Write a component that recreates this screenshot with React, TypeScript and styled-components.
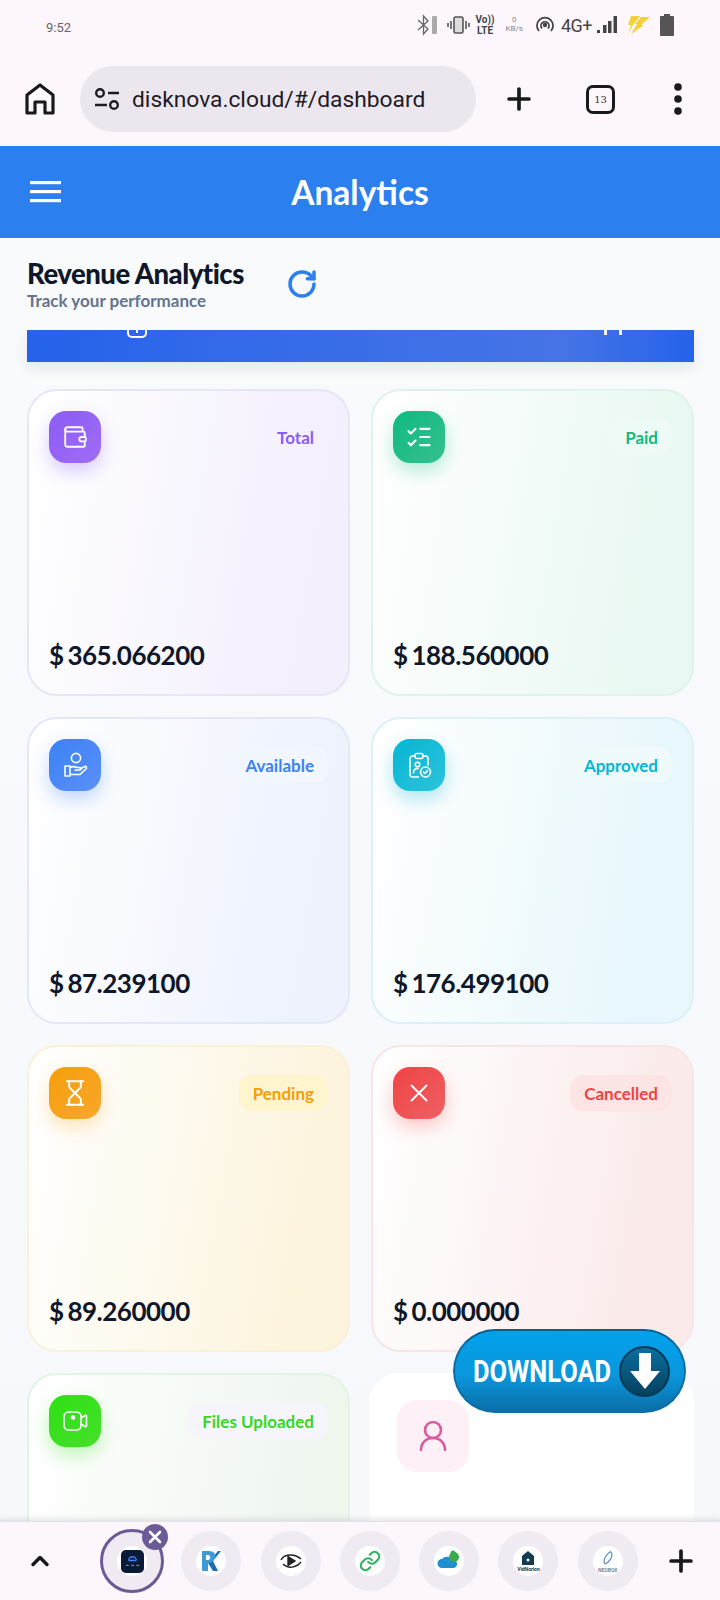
import React from 'react';
import styled, { createGlobalStyle } from 'styled-components';
import {
  Wallet,
  ListChecks,
  Hourglass,
  X,
  RotateCw,
  Plus,
  ChevronUp,
  Link,
} from 'lucide-react';

const GlobalStyle = createGlobalStyle`
  html, body { margin: 0; padding: 0; background: #fdf6fd; }
  * { box-sizing: border-box; }
  body { font-family: "Lato", "Liberation Sans", sans-serif; }
`;

const Screen = styled.div`
  position: relative;
  width: 720px;
  height: 1600px;
  display: flex;
  flex-direction: column;
  overflow: hidden;
`;

const BrowserChrome = styled.div`
  height: 146px;
  flex-shrink: 0;
  background: #fdf6fd;
  display: flex;
  flex-direction: column;
`;

const StatusBar = styled.div`
  height: 65px;
  padding: 14px 46px 0 46px;
  display: flex;
  align-items: flex-start;
  justify-content: space-between;
  color: #666;
  font: 13px "Roboto", sans-serif;
`;

const Clock = styled.span`
  margin-top: 6px;
`;

const StatusIcons = styled.div`
  display: flex;
  align-items: center;
  height: 22px;
  color: #444;
`;

const StatusSlot = styled.span<{ $gap: number }>`
  display: flex;
  margin-left: ${(p) => p.$gap}px;
`;

const NetText = styled.span`
  font-size: 18px;
  letter-spacing: -0.5px;
  color: #444;
`;

const TinyStack = styled.span<{ $size: number; $weight: number; $color: string }>`
  display: flex;
  flex-direction: column;
  align-items: center;
  font-size: ${(p) => p.$size}px;
  line-height: 1.1;
  font-weight: ${(p) => p.$weight};
  color: ${(p) => p.$color};
`;

const UrlRow = styled.div`
  display: flex;
  align-items: center;
  height: 68px;
  padding: 0 0 0 24px;
`;

const UrlPill = styled.div`
  width: 396px;
  height: 66px;
  margin-left: 24px;
  border-radius: 33px;
  background: #ece7ef;
  display: flex;
  align-items: center;
  gap: 12px;
  padding-left: 14px;
  color: #1f1b24;
  font: 22.8px "Roboto", sans-serif;
  white-space: nowrap;
`;

const ChromeActions = styled.div`
  display: flex;
  align-items: center;
  margin-left: 26px;
`;

const TabCount = styled.div`
  width: 29px;
  height: 29px;
  margin: 0 59px 0 50px;
  border: 3px solid #1a1a1a;
  border-radius: 7px;
  font: 10px "DejaVu Serif", serif;
  color: #333;
  display: flex;
  align-items: center;
  justify-content: center;
`;

const AppHeader = styled.header`
  height: 92px;
  flex-shrink: 0;
  background: #2b7fef;
  color: #fff;
  display: flex;
  align-items: center;
  padding-left: 30px;
`;

const HeaderTitle = styled.h1`
  flex: 1;
  margin: 0 0 0 -61px;
  text-align: center;
  font-size: 33.5px;
  font-weight: 700;
`;

const Main = styled.main`
  flex: 1;
  min-height: 0;
  background: linear-gradient(180deg, #f8fafc 0%, #f6f8fc 100%);
  display: flex;
  flex-direction: column;
`;

const TitleRow = styled.div`
  height: 92px;
  flex-shrink: 0;
  padding: 0 27px;
  display: flex;
  align-items: center;
  gap: 42px;
`;

const TitleText = styled.div`
  display: flex;
  flex-direction: column;
  width: 217px;
  padding-top: 2px;
`;

const PageTitle = styled.h2`
  margin: 0;
  color: #0f172a;
  font-size: 27.5px;
  line-height: 30px;
  font-weight: 900;
  letter-spacing: -0.5px;
  white-space: nowrap;
`;

const PageSub = styled.div`
  margin-top: 1px;
  color: #64748b;
  font-size: 17px;
  line-height: 22px;
  font-weight: 700;
  white-space: nowrap;
`;

const Scroller = styled.div`
  flex: 1;
  min-height: 0;
  overflow: hidden;
  padding: 0 26px 0 27px;
`;

const Banner = styled.div`
  height: 32px;
  background: linear-gradient(90deg, #2563eb 0%, #3a6ee8 50%, #4674e6 80%, #2563eb 100%);
  box-shadow: 0 6px 14px rgba(15, 23, 42, 0.08);
  display: flex;
  justify-content: space-between;
  align-items: flex-start;
  overflow: hidden;
  padding: 0 72px 0 100px;
`;

const BannerGlyph = styled.span`
  display: flex;
  justify-content: center;
  width: 20px;
  height: 8px;
  border: 2px solid #fff;
  border-top: 0;
  border-radius: 0 0 5px 5px;
`;

const BannerGlyphDot = styled.span`
  width: 2px;
  height: 3px;
  background: #fff;
`;

const BannerTicks = styled.span`
  display: flex;
  gap: 12px;
`;

const BannerTick = styled.span`
  width: 3px;
  height: 5px;
  background: #f3f6fe;
`;

const CardGrid = styled.div`
  display: grid;
  grid-template-columns: 323px 323px;
  grid-auto-rows: 307px;
  column-gap: 21px;
  row-gap: 21px;
  margin-top: 27px;
`;

interface Tone {
  $tint: string;
  $edge: string;
}

const Card = styled.div<Tone>`
  border-radius: 30px;
  border: 2px solid ${(p) => p.$edge};
  background: linear-gradient(100deg, #ffffff 0%, ${(p) => p.$tint} 85%);
  padding: 20px 20px 23px 20px;
  display: flex;
  flex-direction: column;
  justify-content: space-between;
`;

const PlainCard = styled.div`
  border-radius: 30px;
  background: #fff;
  padding: 27px 28px;
  margin-left: -2px;
`;

const PlainIcon = styled.div`
  width: 72px;
  height: 72px;
  border-radius: 20px;
  background: #fdf0f7;
  display: flex;
  align-items: center;
  justify-content: center;
`;

const CardTop = styled.div`
  display: flex;
  align-items: flex-start;
  justify-content: space-between;
`;

const IconTile = styled.div<{ $from: string; $to: string; $glow: string }>`
  width: 52px;
  height: 52px;
  border-radius: 17px;
  color: #fff;
  background: linear-gradient(135deg, ${(p) => p.$from}, ${(p) => p.$to});
  box-shadow: 0 8px 18px ${(p) => p.$glow};
  display: flex;
  align-items: center;
  justify-content: center;
`;

const Badge = styled.div<{ $color: string; $bg: string }>`
  margin-top: 8px;
  height: 36px;
  padding: 0 14px;
  border-radius: 13px;
  color: ${(p) => p.$color};
  background: ${(p) => p.$bg};
  font-size: 17px;
  font-weight: 700;
  display: flex;
  align-items: center;
`;

const Amount = styled.div`
  color: #0f172a;
  font-size: 26px;
  line-height: 32px;
  font-weight: 700;
  letter-spacing: -0.5px;
  word-spacing: -2px;
`;

const BottomBar = styled.nav`
  position: absolute;
  left: 0;
  right: 0;
  bottom: 0;
  height: 79px;
  background: #fdf6fd;
  border-top: 1px solid #e6e2e8;
  box-shadow: 0 -2px 4px rgba(0, 0, 0, 0.06);
  display: flex;
  align-items: center;
  padding: 0 0 0 26px;
`;

const ChevronSlot = styled.div`
  width: 28px;
  display: flex;
  justify-content: center;
  margin-right: 48px;
`;

const TabList = styled.div`
  display: flex;
  gap: 19.3px;
`;

const TabCircle = styled.div<{ $active?: boolean }>`
  position: relative;
  width: 60px;
  height: 60px;
  border-radius: 50%;
  background: #f0eaf3;
  display: flex;
  align-items: center;
  justify-content: center;
  ${(p) => p.$active && 'outline: 3px solid #6c5a96; outline-offset: -1px;'}
`;

const TabFace = styled.div`
  width: 30px;
  height: 30px;
  border-radius: 50%;
  background: #fff;
  display: flex;
  flex-direction: column;
  align-items: center;
  justify-content: center;
`;

const TabCaption = styled.span<{ $color: string }>`
  font: 700 5px/6px "Roboto", sans-serif;
  color: ${(p) => p.$color};
`;

const CloseDot = styled.div`
  position: absolute;
  top: -7px;
  right: -6px;
  width: 26px;
  height: 26px;
  border-radius: 50%;
  background: #6c5a96;
  color: #fff;
  display: flex;
  align-items: center;
  justify-content: center;
`;

const AddTab = styled.div`
  margin-left: 26px;
  display: flex;
`;

const DownloadButton = styled.div`
  position: absolute;
  left: 453px;
  top: 1329px;
  width: 233px;
  height: 84px;
  border-radius: 42px;
  border: 2px solid #0b6ea6;
  border-top-color: #075f92;
  background: linear-gradient(180deg, #02a2ec 0%, #0b97dc 55%, #0a6ea8 100%);
  display: flex;
  align-items: center;
  padding-left: 18px;
  gap: 9px;
`;

const DownloadLabel = styled.span`
  width: 137px;
  color: #fff;
  font: 700 31px "Roboto", sans-serif;
  white-space: nowrap;
  transform: scaleX(0.82);
  transform-origin: left center;
`;

const DownloadDisc = styled.span`
  width: 51px;
  height: 51px;
  border-radius: 50%;
  background: linear-gradient(180deg, #0b6f9f, #04405f);
  border: 2px solid #053a57;
  display: flex;
  align-items: center;
  justify-content: center;
`;

const BottomFade = styled.div`
  position: absolute;
  left: 0;
  right: 0;
  bottom: 79px;
  height: 8px;
  background: linear-gradient(180deg, rgba(255, 255, 255, 0), rgba(200, 200, 205, 0.18));
`;

const lineIcon = {
  width: 28,
  height: 28,
  viewBox: '0 0 28 28',
  fill: 'none',
  stroke: 'currentColor',
  strokeWidth: 1.6,
  strokeLinecap: 'round' as const,
  strokeLinejoin: 'round' as const,
};

const HandPerson = () => (
  <svg {...lineIcon}>
    <circle cx="15" cy="7" r="4.6" />
    <path d="M4 15h5v10H4zM9 16.500c3-1.500 5-1 7 0h3c1.500 0 1.500 2.500 0 2.500h-5M19 18l5-2.500c1.500-.5 2 1.500 1 2.500l-6 5.500H9" />
  </svg>
);

const ClipboardUser = () => (
  <svg {...lineIcon}>
    <path d="M10 5H7.500A2.500 2.500 0 0 0 5 7.500v16A2.500 2.500 0 0 0 7.500 26h6M18 5h2.500A2.500 2.500 0 0 1 23 7.500V14" />
    <rect x="10" y="2.500" width="8" height="5" rx="2" />
    <circle cx="12.500" cy="13.500" r="2.300" />
    <path d="M8.500 22c0-3 2-4.500 4.500-4.500" />
    <circle cx="20.500" cy="21" r="5" />
    <path d="M18.500 21l1.500 1.500 2.500-3" />
  </svg>
);

const VideoSquare = () => (
  <svg {...lineIcon}>
    <rect x="3" y="5" width="17" height="18" rx="4.500" />
    <circle cx="12" cy="10.500" r="1.500" fill="currentColor" />
    <path d="M20 11l4-2.500c.8-.4 1.500 0 1.500 1v9c0 1-.7 1.400-1.500 1L20 17" />
  </svg>
);

const cards = [
  { label: 'Total', amount: '$ 365.066200', color: '#8b5cf6', from: '#8b5cf6', to: '#a06cf6', glow: 'rgba(139,92,246,.3)', tint: '#f3effd', edge: '#e9e5f8', badge: 'transparent', icon: <Wallet size={26} strokeWidth={1.7} /> },
  { label: 'Paid', amount: '$ 188.560000', color: '#10b981', from: '#10b981', to: '#34c08e', glow: 'rgba(16,185,129,.28)', tint: '#e9f8f2', edge: '#def3ec', badge: '#eefaf5', icon: <ListChecks size={28} strokeWidth={1.8} /> },
  { label: 'Available', amount: '$ 87.239100', color: '#3b82f6', from: '#3b82f6', to: '#5b8ff7', glow: 'rgba(59,130,246,.3)', tint: '#edf2fd', edge: '#e1e8f8', badge: '#f2f6fe', icon: <HandPerson /> },
  { label: 'Approved', amount: '$ 176.499100', color: '#06b6d4', from: '#06b6d4', to: '#2cc3dc', glow: 'rgba(6,182,212,.3)', tint: '#e7f7fc', edge: '#dcf1f7', badge: '#effafd', icon: <ClipboardUser /> },
  { label: 'Pending', amount: '$ 89.260000', color: '#f59e0b', from: '#f59e0b', to: '#f9a72c', glow: 'rgba(245,158,11,.26)', tint: '#fcf4dd', edge: '#faf1d6', badge: '#fef4cd', icon: <Hourglass size={28} strokeWidth={1.7} /> },
  { label: 'Cancelled', amount: '$ 0.000000', color: '#ef4444', from: '#ef4444', to: '#f05f64', glow: 'rgba(239,68,68,.28)', tint: '#fbeaea', edge: '#f8e5e6', badge: '#fee5e5', icon: <X size={30} strokeWidth={1.5} /> },
  { label: 'Files Uploaded', amount: '', color: '#39d625', from: '#2fe014', to: '#45e02a', glow: 'rgba(47,224,20,.28)', tint: '#eef6ee', edge: '#e2f4e3', badge: '#f6f5fc', icon: <VideoSquare /> },
];

const TuneIcon = () => (
  <svg width="26" height="24" viewBox="0 0 26 24" fill="none" stroke="#1f1b24" strokeWidth="2.4">
    <circle cx="6" cy="6" r="3.800" />
    <path d="M14 6h11M1 18h12" />
    <circle cx="20" cy="18" r="3.800" />
  </svg>
);

const tabFaces = [
  <svg width="22" height="24" viewBox="0 0 22 24"><path d="M8 14l10-12h3l-8 10 5 10h-5z" fill="#1c6fb0" /><path fillRule="evenodd" d="M2 2h7c6 0 7 4 6 7s-4 5-7 5v8H2zM6 6v5h2c3 0 3-5 0-5z" fill="#3f9bd6" /></svg>,
  <svg width="22" height="16" viewBox="0 0 22 16" fill="none" stroke="#222" strokeWidth="1.4"><path d="M1 7c3-6 13-7 20-1M3 11c5 5 13 4 18-2" /><path d="M8 3.500l7 4.500-7 4.500z" fill="#222" /></svg>,
  <Link size={22} color="#2fb45f" strokeWidth={2.4} />,
  <svg width="24" height="24" viewBox="0 0 24 24"><path d="M5 19a4.500 4.500 0 0 1 0-9 6 6 0 0 1 10 1 4 4 0 0 1 2 8z" fill="#1f8fd4" /><circle cx="17" cy="8" r="5" fill="#3aaa4a" /><circle cx="16" cy="4" r="2.500" fill="#3aaa4a" /></svg>,
  <>
    <svg width="14" height="16" viewBox="0 0 14 16"><path d="M7 1l6 5v9H1V6z" fill="#123a52" /><circle cx="7" cy="10" r="1.500" fill="#fff" /></svg>
    <TabCaption $color="#123a52">VidNorion</TabCaption>
  </>,
  <>
    <svg width="18" height="18" viewBox="0 0 24 24" fill="none" stroke="#5a8fc4" strokeWidth="1.6"><path d="M8 20c-4-6 3-14 8-17M16 4c4 6-3 14-8 16" /></svg>
    <TabCaption $color="#6f8aa6">NEOBOX</TabCaption>
  </>,
];

const App: React.FC = () => {
  return (
    <Screen>
      <GlobalStyle />
      <BrowserChrome>
        <StatusBar>
          <Clock>9:52</Clock>
          <StatusIcons>
            <svg width="21" height="22" viewBox="0 0 21 22" fill="none" stroke="#666" strokeWidth="1.300"><path d="M1 6l10 9-4.500 5V2L11 7 1 16" /><rect x="15" y="2" width="5" height="18" rx="1" fill="#aaa" stroke="none" /></svg>
            <StatusSlot $gap={9}>
              <svg width="23" height="20" viewBox="0 0 23 20" fill="none" stroke="#555" strokeWidth="1.600"><rect x="7" y="2" width="9" height="16" rx="1.500" fill="#ddd" /><path d="M4 6v8M1 8v4M19 6v8M22 8v4" /></svg>
            </StatusSlot>
            <StatusSlot $gap={5}>
              <TinyStack $size={10} $weight={700} $color="#444"><span>Vo))</span><span>LTE</span></TinyStack>
            </StatusSlot>
            <StatusSlot $gap={11}>
              <TinyStack $size={8} $weight={400} $color="#888"><span>0</span><span>KB/s</span></TinyStack>
            </StatusSlot>
            <StatusSlot $gap={13}>
              <svg width="18" height="18" viewBox="0 0 18 18" fill="none" stroke="#444" strokeWidth="1.800"><path d="M3 15a8 8 0 1 1 12 0M6 12.500a4 4 0 1 1 6 0" /><circle cx="9" cy="9" r="1.300" fill="#444" /></svg>
            </StatusSlot>
            <StatusSlot $gap={7}>
              <NetText>4G+</NetText>
            </StatusSlot>
            <StatusSlot $gap={5}>
              <svg width="20" height="18" viewBox="0 0 20 18" fill="#444"><rect x="0" y="14" width="3" height="3" /><rect x="6" y="9" width="3.500" height="8" /><rect x="11" y="5" width="3.500" height="12" /><rect x="16.500" y="0" width="3.500" height="17" /></svg>
            </StatusSlot>
            <StatusSlot $gap={9}>
              <svg width="24" height="22" viewBox="0 0 24 22" fill="#f3d13a"><path d="M5 2h9L7 11l-5 9 3-9H2zM15 3h9l-9 8h3L5 20l6-10H9z" /></svg>
            </StatusSlot>
            <StatusSlot $gap={10}>
              <svg width="14" height="22" viewBox="0 0 14 22" fill="#555"><path d="M4 0h6v2h3a1 1 0 0 1 1 1v18a1 1 0 0 1-1 1H1a1 1 0 0 1-1-1V3a1 1 0 0 1 1-1h3z" /></svg>
            </StatusSlot>
          </StatusIcons>
        </StatusBar>
        <UrlRow>
          <svg width="32" height="34" viewBox="0 0 32 34" fill="none" stroke="#1a1a1a" strokeWidth="3.200" strokeLinejoin="round"><path d="M3 13L16 3l13 10v18h-8V20H11v11H3z" /></svg>
          <UrlPill>
            <TuneIcon />
            disknova.cloud/#/dashboard
          </UrlPill>
          <ChromeActions>
            <Plus size={34} color="#1a1a1a" strokeWidth={2.6} />
            <TabCount>13</TabCount>
            <svg width="8" height="32" viewBox="0 0 8 32" fill="#1a1a1a"><circle cx="4" cy="4" r="3.800" /><circle cx="4" cy="16" r="3.800" /><circle cx="4" cy="28" r="3.800" /></svg>
          </ChromeActions>
        </UrlRow>
      </BrowserChrome>

      <AppHeader>
        <svg width="31" height="22" viewBox="0 0 31 22" fill="#fff"><rect y="0" width="31" height="3.200" /><rect y="9" width="31" height="3.200" /><rect y="18" width="31" height="3.200" /></svg>
        <HeaderTitle>Analytics</HeaderTitle>
      </AppHeader>

      <Main>
        <TitleRow>
          <TitleText>
            <PageTitle>Revenue Analytics</PageTitle>
            <PageSub>Track your performance</PageSub>
          </TitleText>
          <RotateCw size={32} color="#2b7fef" strokeWidth={2.6} />
        </TitleRow>
        <Scroller>
          <Banner>
            <BannerGlyph><BannerGlyphDot /></BannerGlyph>
            <BannerTicks>
              <BannerTick />
              <BannerTick />
            </BannerTicks>
          </Banner>
          <CardGrid>
            {cards.map((c) => (
              <Card key={c.label} $tint={c.tint} $edge={c.edge}>
                <CardTop>
                  <IconTile $from={c.from} $to={c.to} $glow={c.glow}>
                    {c.icon}
                  </IconTile>
                  <Badge $color={c.color} $bg={c.badge}>{c.label}</Badge>
                </CardTop>
                {c.amount && <Amount>{c.amount}</Amount>}
              </Card>
            ))}
            <PlainCard>
              <PlainIcon>
                <svg width="28" height="32" viewBox="0 0 28 32" fill="none" stroke="#db5ba0" strokeWidth="2.600" strokeLinecap="round"><circle cx="14" cy="10" r="8" /><path d="M2 30c0-7 5-12 12-12s12 5 12 12" /></svg>
              </PlainIcon>
            </PlainCard>
          </CardGrid>
        </Scroller>
      </Main>

      <DownloadButton>
        <DownloadLabel>DOWNLOAD</DownloadLabel>
        <DownloadDisc>
          <svg width="32" height="38" viewBox="0 0 32 38" fill="#fff"><path d="M10 1h12v18h9L16 37 1 19h9z" /></svg>
        </DownloadDisc>
      </DownloadButton>

      <BottomFade />
      <BottomBar>
        <ChevronSlot>
          <ChevronUp size={30} color="#1a1a1a" strokeWidth={3} />
        </ChevronSlot>
        <TabList>
          <TabCircle $active>
            <TabFace>
              <svg width="23" height="23" viewBox="0 0 24 24"><rect width="24" height="24" rx="5" fill="#0b1a38" /><path d="M8 11a4 4 0 0 1 8 0M8 11h8" fill="none" stroke="#3b82f6" strokeWidth="1.400" /><path d="M5 16h3M10.500 16h3M16 16h3" stroke="#9ab" strokeWidth="1" /></svg>
            </TabFace>
            <CloseDot><X size={20} strokeWidth={3.2} /></CloseDot>
          </TabCircle>
          {tabFaces.map((face, i) => (
            <TabCircle key={i}>
              <TabFace>{face}</TabFace>
            </TabCircle>
          ))}
        </TabList>
        <AddTab>
          <Plus size={34} color="#1a1a1a" strokeWidth={2.6} />
        </AddTab>
      </BottomBar>
    </Screen>
  );
};

export default App;
